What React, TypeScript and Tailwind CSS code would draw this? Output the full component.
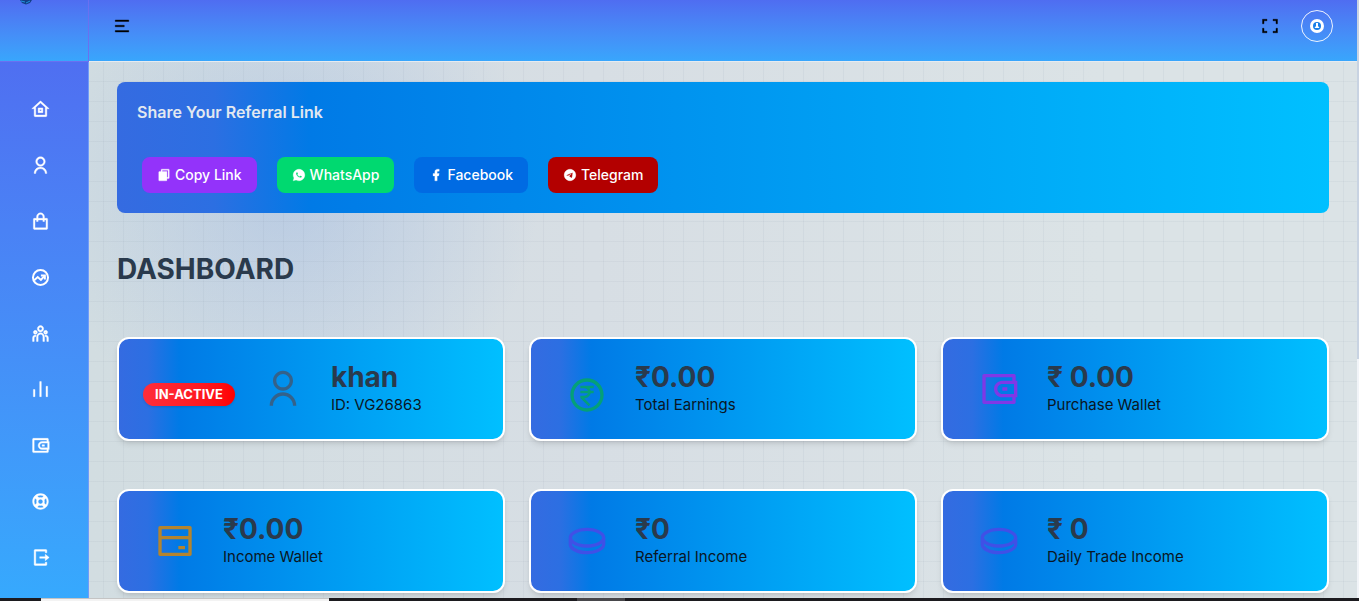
import type { ReactNode } from 'react';
import type { IconType } from 'react-icons';
import {
  RiBankCardLine,
  RiBarChartLine,
  RiCoinLine,
  RiFacebookFill,
  RiFileCopyFill,
  RiFullscreenLine,
  RiHome8Line,
  RiLifebuoyLine,
  RiLogoutBoxRLine,
  RiMenu2Line,
  RiMoneyRupeeCircleLine,
  RiShoppingBagLine,
  RiTeamLine,
  RiTelegramFill,
  RiUserLine,
  RiWallet3Line,
  RiWhatsappFill,
} from 'react-icons/ri';

const panelGradient = 'bg-[linear-gradient(90deg,#356be1_0%,#2c6fe2_8%,#007ae6_16%,#00c0ff_100%)]';

function TradeIcon({ className }: { className?: string }) {
  return (
    <svg viewBox="0 0 24 24" className={className} aria-hidden="true">
      <g fill="none" stroke="currentColor" strokeWidth="2.5">
        <circle cx="12" cy="12" r="9.5" />
        <path d="M4 15.5l4.5-4 4 3.5 4-4.5" />
        <path d="M12.5 9.5H17.5v5" />
      </g>
    </svg>
  );
}

const navItems: { label: string; icon: IconType | typeof TradeIcon }[] = [
  { label: 'Dashboard', icon: RiHome8Line },
  { label: 'Profile', icon: RiUserLine },
  { label: 'Packages', icon: RiShoppingBagLine },
  { label: 'Trade', icon: TradeIcon },
  { label: 'Team', icon: RiTeamLine },
  { label: 'Income', icon: RiBarChartLine },
  { label: 'Wallet', icon: RiWallet3Line },
  { label: 'Support', icon: RiLifebuoyLine },
  { label: 'Logout', icon: RiLogoutBoxRLine },
];

const shareButtons = [
  { label: 'Copy Link', icon: RiFileCopyFill, color: 'bg-[#9333fa]' },
  { label: 'WhatsApp', icon: RiWhatsappFill, color: 'bg-[#00d970]' },
  { label: 'Facebook', icon: RiFacebookFill, color: 'bg-[#006be3]' },
  { label: 'Telegram', icon: RiTelegramFill, color: 'bg-[#b30000]' },
];

function Logo() {
  return (
    <svg width="12" height="5" viewBox="0 0 12 5" className="ml-5 block" aria-hidden="true">
      <path d="M0 0h12l-2 3-4 1.5L2 3z" fill="#123f86" />
      <path d="M1 1l4 1M6 3l4-2" stroke="#1f93e0" fill="none" />
    </svg>
  );
}

function Sidebar() {
  return (
    <aside className="flex w-[89px] shrink-0 flex-col">
      <div className="h-[62px] shrink-0 border-r border-b border-[#6a70f0] bg-linear-to-b from-[#4f6df1] to-[#38a6fc]">
        <Logo />
      </div>
      <nav className="flex-1 border-r border-[#6f9bf9] bg-linear-to-b from-[#4f6ff1] to-[#36a9fd] pt-[19px] pr-[7px]">
        {navItems.map(({ label, icon: Icon }) => (
          <a key={label} href="#" aria-label={label} className="flex h-14 items-center justify-center text-white">
            <Icon className="h-[19px] w-[19px] stroke-[0.5]" />
          </a>
        ))}
      </nav>
    </aside>
  );
}

function Header() {
  return (
    <header className="flex h-[61px] shrink-0 items-center justify-between bg-linear-to-b from-[#4f6df1] to-[#38a6fc] px-6 pb-[9px]">
      <button type="button" aria-label="Toggle menu" className="text-black">
        <RiMenu2Line className="h-[18px] w-[18px] stroke-[0.5]" />
      </button>
      <div className="flex items-center gap-[22px]">
        <button type="button" aria-label="Fullscreen" className="text-black">
          <RiFullscreenLine className="h-[18px] w-[18px] stroke-[0.5]" />
        </button>
        <button
          type="button"
          aria-label="Account"
          className="flex h-8 w-8 items-center justify-center rounded-full border border-white/90"
        >
          <svg width="14" height="14" viewBox="0 0 14 14" aria-hidden="true">
            <circle cx="7" cy="7" r="7" fill="#fff" />
            <circle cx="7" cy="7" r="4" fill="#1a7fe8" />
            <path d="M6 4h2v3l1.5 2h-5L6 7z" fill="#fff" />
          </svg>
        </button>
      </div>
    </header>
  );
}

function SharePanel() {
  return (
    <section className={`rounded-lg p-5 ${panelGradient}`}>
      <h2 className="text-base leading-5 font-semibold text-slate-200">Share Your Referral Link</h2>
      <div className="mt-[35px] flex flex-wrap gap-5 pl-[5px]">
        {shareButtons.map(({ label, icon: Icon, color }) => (
          <button
            key={label}
            type="button"
            className={`flex h-9 items-center gap-1 rounded-lg px-[15px] text-sm font-medium text-white ${color}`}
          >
            <Icon className="h-[14px] w-[14px] stroke-[0.5]" />
            {label}
          </button>
        ))}
      </div>
    </section>
  );
}

interface StatCardProps {
  title: string;
  label: string;
  icon: ReactNode;
  badge?: string;
}

function StatCard({ title, label, icon, badge }: StatCardProps) {
  return (
    <div
      className={`flex h-[104px] items-center gap-7 rounded-xl border-2 border-white bg-origin-border shadow-md ${panelGradient} ${badge ? 'pl-6' : 'pl-9'}`}
    >
      {badge && (
        <span className="mt-[10px] rounded-full bg-linear-to-r from-[#ff2d3a] to-[#ff0000] px-3 text-[13px] leading-[23px] font-bold text-white shadow-sm">
          {badge}
        </span>
      )}
      {icon}
      <div>
        <h3 className="text-[28px] leading-8 font-bold text-[#2a3a4c]">{title}</h3>
        <p className="text-[15px] leading-6 text-[#0a1624]">{label}</p>
      </div>
    </div>
  );
}

export default function App() {
  return (
    <div className="flex h-screen flex-col overflow-hidden font-['Inter',sans-serif]">
      <div className="flex min-h-0 flex-1">
        <Sidebar />
        <div className="flex min-w-0 flex-1 flex-col">
          <Header />
          <main className="min-h-0 flex-1 overflow-hidden border-t border-[#e6ebf0] bg-[linear-gradient(90deg,#64748b10_1px,transparent_1px),linear-gradient(#64748b10_1px,transparent_1px),radial-gradient(circle_at_200px_130px,#85a8e455,transparent_250px),linear-gradient(90deg,#d2dde1,#d7dee4_40%,#dbe3e6_80%)] bg-[size:20px_20px,20px_20px,auto,auto] bg-[position:14px_19px,14px_19px,0_0,0_0] px-7 pt-5">
            <SharePanel />
            <h1 className="mt-10 text-[28px] leading-8 font-bold text-[#2a3a4c]">DASHBOARD</h1>
            <div className="mt-13 grid grid-cols-3 gap-x-6 gap-y-12">
              <StatCard
                title="khan"
                label="ID: VG26863"
                badge="IN-ACTIVE"
                icon={<RiUserLine className="h-10 w-10 text-[#34628a]" />}
              />
              <StatCard
                title="₹0.00"
                label="Total Earnings"
                icon={<RiMoneyRupeeCircleLine className="mt-3 h-10 w-10 text-[#04a078]" />}
              />
              <StatCard
                title="₹ 0.00"
                label="Purchase Wallet"
                icon={<RiWallet3Line className="h-10 w-10 text-[#8038e6]" />}
              />
              <StatCard
                title="₹0.00"
                label="Income Wallet"
                icon={<RiBankCardLine className="h-10 w-10 text-[#b4842e]" />}
              />
              <StatCard
                title="₹0"
                label="Referral Income"
                icon={<RiCoinLine className="h-10 w-10 text-[#4050e6]" />}
              />
              <StatCard
                title="₹ 0"
                label="Daily Trade Income"
                icon={<RiCoinLine className="h-10 w-10 text-[#4050e6]" />}
              />
            </div>
          </main>
        </div>
        {/* scroll track */}
        <div className="w-[2px] shrink-0 bg-[#f1f4f8]">
          <div className="h-3/5 bg-[#c8d3e2]" />
        </div>
      </div>
      {/* taskbar edge */}
      <div className="flex h-[3px] shrink-0 bg-[#1c1b1f]">
        <div className="ml-[41px] w-72 border-t border-[#c4c4c4] bg-[#f3f3f3]" />
        <div className="ml-62 w-12 bg-[#48474b]" />
      </div>
    </div>
  );
}
